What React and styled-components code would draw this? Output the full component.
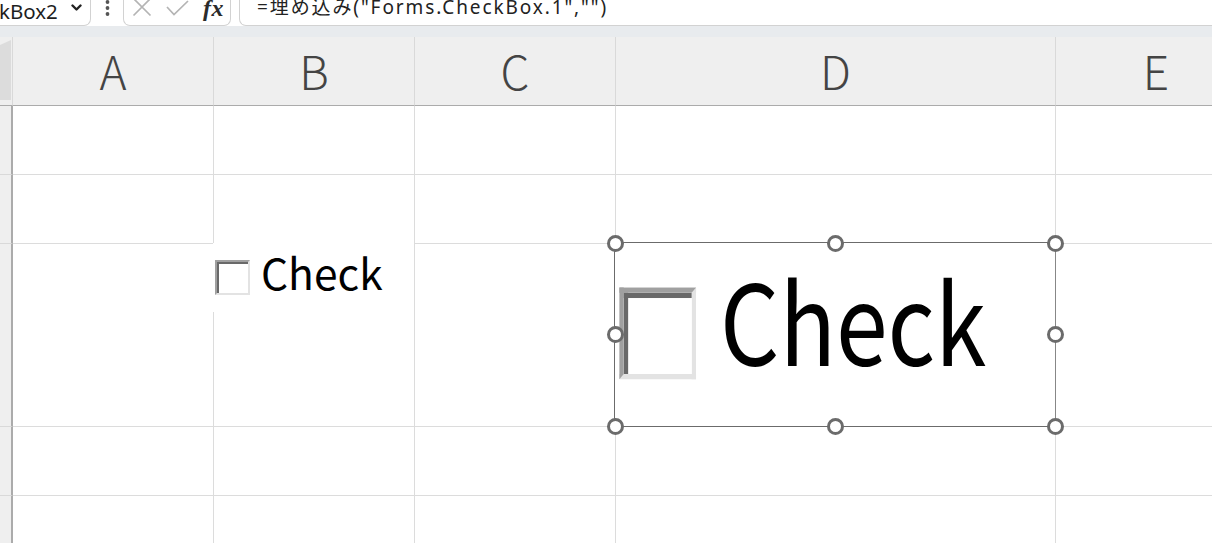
import React from "react";
import styled, { createGlobalStyle } from "styled-components";

const GlobalStyle = createGlobalStyle`
  html, body { margin: 0; padding: 0; background: #ffffff; overflow: hidden; }
  body { font-family: "Noto Sans", "Noto Sans CJK JP", sans-serif; }
  * { box-sizing: border-box; }
`;

const Page = styled.div`
  width: 1212px;
  height: 543px;
  overflow: hidden;
  display: flex;
  flex-direction: column;
  background: #fff;
`;

const TopBar = styled.div`
  display: flex;
  height: 26px;
  flex-shrink: 0;
  background: #fff;
  overflow: hidden;
`;

const NameBox = styled.div`
  width: 91px;
  display: flex;
  align-items: flex-start;
  border-right: 1px solid #d2d2d2;
  border-bottom: 1px solid #d2d2d2;
  border-bottom-right-radius: 7px;
`;

const NameText = styled.span`
  font-family: "Noto Sans", sans-serif;
  font-size: 20.5px;
  line-height: 20px;
  color: #1e1e1e;
  margin-left: -1px;
  margin-top: 1px;
`;

const Chevron = styled.svg`
  margin-left: auto;
  margin-right: 8px;
  margin-top: 4px;
`;

const MoreDots = styled.div`
  width: 32px;
  display: flex;
  justify-content: center;
`;

const IconBox = styled.div`
  width: 108px;
  display: flex;
  align-items: flex-start;
  padding-left: 8px;
  border: 1px solid #d2d2d2;
  border-top: none;
  border-bottom-left-radius: 7px;
  border-bottom-right-radius: 7px;
`;

const IconSvg = styled.svg`
  margin-top: ${(p) => p.$mt || 0}px;
  margin-right: ${(p) => p.$mr || 0}px;
  flex-shrink: 0;
`;

const Fx = styled.span`
  font-family: "Liberation Serif", "DejaVu Serif", serif;
  font-style: italic;
  font-weight: 700;
  font-size: 24px;
  line-height: 20px;
  color: #2b2b2b;
  margin-top: -2px;
  letter-spacing: 0.5px;
`;

const FormulaBox = styled.div`
  flex: 1;
  margin-left: 8px;
  border-left: 1px solid #d2d2d2;
  border-bottom: 1px solid #d2d2d2;
  border-bottom-left-radius: 7px;
  padding-left: 17px;
  display: flex;
  align-items: flex-start;
`;

const FormulaText = styled.span`
  font-family: "Noto Sans", "Noto Sans CJK JP", sans-serif;
  font-size: 19px;
  line-height: 18px;
  letter-spacing: 1.9px;
  color: #222;
  margin-top: -2px;
  white-space: nowrap;
`;

const Strip = styled.div`
  height: 11px;
  flex-shrink: 0;
  background: #e8ebee;
`;

const Sheet = styled.div`
  position: relative;
  flex: 1;
  display: grid;
  grid-template-columns: 13px 201px 201px 201px 440px 201px 201px;
  grid-template-rows: 69px 69px 69px 183px 69px 69px;
  overflow: hidden;
`;

const Corner = styled.div`
  background: #efefef;
  border-right: 1px solid #d9d9d9;
  border-bottom: 1px solid #ababab;
  display: flex;
  align-items: flex-end;
  padding-bottom: 5px;
`;

const ColHead = styled.div`
  background: #efefef;
  border-right: 1px solid #d9d9d9;
  border-bottom: 1px solid #ababab;
  display: flex;
  align-items: center;
  justify-content: center;
  font-family: "Noto Sans CJK JP", "Noto Sans", sans-serif;
  font-size: 46px;
  font-weight: 300;
  color: #444;
  padding-bottom: 2px;
`;

const RowHead = styled.div`
  background: #efefef;
  border-right: 2px solid #ababab;
  border-bottom: 1px solid #d9d9d9;
`;

const Cell = styled.div`
  background: #fff;
  border-right: 1px solid #dcdcdc;
  border-bottom: 1px solid #dcdcdc;
`;

const Control = styled.div`
  position: absolute;
  left: ${(p) => p.$left}px;
  top: ${(p) => p.$top}px;
  width: 201px;
  height: 69px;
  background: #fff;
  display: flex;
  align-items: center;
  padding-left: 2px;
  transform-origin: 0 0;
  transform: scale(${(p) => p.$sx}, ${(p) => p.$sy});
`;

const Box3D = styled.div`
  width: 35px;
  height: 35px;
  flex-shrink: 0;
  border: 2px solid;
  border-color: #a0a0a0 #e3e3e3 #e3e3e3 #a0a0a0;
  margin-top: -1px;
`;

const BoxInner = styled.div`
  width: 100%;
  height: 100%;
  border-top: 2px solid #696969;
  border-left: 2px solid #696969;
  background: #fff;
`;

const Label = styled.span`
  font-family: "Noto Sans CJK JP", "Noto Sans", sans-serif;
  font-size: 42.5px;
  line-height: 43px;
  color: #000;
  margin-left: 11px;
  margin-top: -13px;
`;

const Frame = styled.div`
  position: absolute;
  left: 614px;
  top: 205px;
  width: 442px;
  height: 185px;
  border: 1px solid #6b6b6b;
`;

const Handle = styled.span`
  position: absolute;
  left: calc(${(p) => p.$x}% - 8.5px);
  top: calc(${(p) => p.$y}% - 8.5px);
  width: 17px;
  height: 17px;
  border-radius: 50%;
  border: 3px solid #6b6b6b;
  background: #fff;
`;

function CheckControl({ left, top, sx = 1, sy = 1 }) {
  return (
    <Control $left={left} $top={top} $sx={sx} $sy={sy}>
      <Box3D>
        <BoxInner />
      </Box3D>
      <Label>Check</Label>
    </Control>
  );
}

const columns = ["A", "B", "C", "D", "E", "F"];
const rows = [1, 2, 3, 4, 5];
const handles = [
  [0, 0], [50, 0], [100, 0],
  [0, 50], [100, 50],
  [0, 100], [50, 100], [100, 100],
];

export default function App() {
  return (
    <Page>
      <GlobalStyle />
      <TopBar>
        <NameBox>
          <NameText>kBox2</NameText>
          <Chevron width="11" height="8" viewBox="0 0 11 8">
            <path d="M1.5 1.5 L5.5 5.5 L9.5 1.5" fill="none" stroke="#222" strokeWidth="2.4" strokeLinecap="round" strokeLinejoin="round" />
          </Chevron>
        </NameBox>
        <MoreDots>
          <svg width="5" height="17" viewBox="0 0 5 17">
            <circle cx="2.5" cy="2" r="1.9" fill="#555" />
            <circle cx="2.5" cy="8" r="1.9" fill="#555" />
            <circle cx="2.5" cy="14" r="1.9" fill="#555" />
          </svg>
        </MoreDots>
        <IconBox>
          <IconSvg $mt={-3} $mr={14} width="20" height="20" viewBox="0 0 20 20">
            <path d="M1.5 1.5 L18.5 18.5 M18.5 1.5 L1.5 18.5" stroke="#b4b4b4" strokeWidth="1.7" fill="none" />
          </IconSvg>
          <IconSvg $mt={0} $mr={14} width="23" height="16" viewBox="0 0 23 16">
            <path d="M1 7 L8 14.5 L22 1" stroke="#b4b4b4" strokeWidth="1.7" fill="none" />
          </IconSvg>
          <Fx>fx</Fx>
        </IconBox>
        <FormulaBox>
          <FormulaText>=埋め込み("Forms.CheckBox.1","")</FormulaText>
        </FormulaBox>
      </TopBar>
      <Strip />
      <Sheet>
        <Corner>
          <svg width="11" height="60" viewBox="0 0 11 60">
            <polygon points="11,0 11,60 0,60 0,5" fill="#dcdcdc" />
          </svg>
        </Corner>
        {columns.map((c) => (
          <ColHead key={c}>{c}</ColHead>
        ))}
        {rows.map((r) => (
          <React.Fragment key={r}>
            <RowHead />
            {columns.map((c) => (
              <Cell key={c + r} />
            ))}
          </React.Fragment>
        ))}
        <CheckControl left={213} top={206} />
        <Frame>
          <CheckControl left={0} top={0} sx={2.19} sy={2.62} />
          {handles.map(([x, y]) => (
            <Handle key={`${x}-${y}`} $x={x} $y={y} />
          ))}
        </Frame>
      </Sheet>
    </Page>
  );
}
